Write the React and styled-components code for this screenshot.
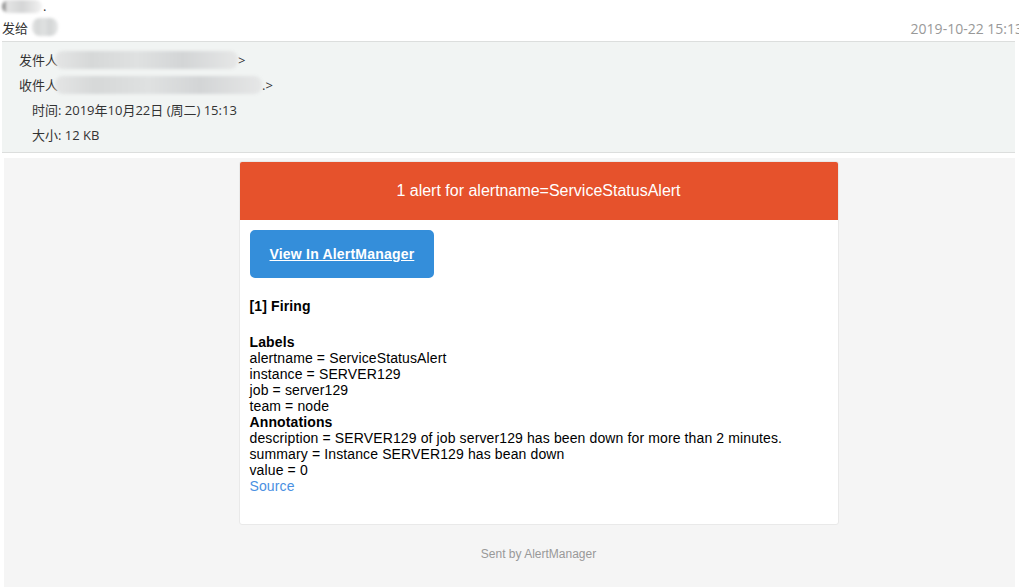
import React from "react";
import styled, { createGlobalStyle } from "styled-components";

const GlobalStyle = createGlobalStyle`
  html, body {
    margin: 0;
    padding: 0;
    background: #ffffff;
    overflow: hidden;
  }
  body {
    font-family: "Open Sans", "Noto Sans CJK SC", sans-serif;
  }
`;

const labels = [
  ["alertname", "ServiceStatusAlert"],
  ["instance", "SERVER129"],
  ["job", "server129"],
  ["team", "node"],
];

const annotations = [
  ["description", "SERVER129 of job server129 has been down for more than 2 minutes."],
  ["summary", "Instance SERVER129 has bean down"],
  ["value", "0"],
];

export default function App() {
  return (
    <React.Fragment>
      <GlobalStyle />
      <Page>
        <TopBar>
          <SenderLine>
            <Blur width={40} height={13} dark />
            <Dot>.</Dot>
          </SenderLine>
          <ToLine>
            <ToText>
              发给 <Blur width={26} height={18} />
            </ToText>
            <DateText>2019-10-22 15:13</DateText>
          </ToLine>
        </TopBar>

        <MetaPanel>
          <MetaRow>
            <MetaLabel>发件人</MetaLabel>
            <MetaValue>
              <Blur width={183} height={18} shift />
              &gt;
            </MetaValue>
          </MetaRow>
          <MetaRow>
            <MetaLabel>收件人</MetaLabel>
            <MetaValue>
              <Blur width={207} height={18} shift />
              .&gt;
            </MetaValue>
          </MetaRow>
          <MetaRow>
            <MetaLabel>时间</MetaLabel>
            <MetaValue>: 2019年10月22日 (周二) 15:13</MetaValue>
          </MetaRow>
          <MetaRow>
            <MetaLabel>大小</MetaLabel>
            <MetaValue>: 12 KB</MetaValue>
          </MetaRow>
        </MetaPanel>

        <MailBody>
          <MailInner>
            <Card>
              <CardHeader>1 alert for alertname=ServiceStatusAlert</CardHeader>
              <CardContent>
                <ButtonRow>
                  <ViewButton href="#">View In AlertManager</ViewButton>
                </ButtonRow>
                <AlertBlock>
                  <Title>[1] Firing</Title>
                  <SectionTitle>Labels</SectionTitle>
                  {labels.map(([k, v]) => (
                    <Line key={k}>
                      {k} = {v}
                    </Line>
                  ))}
                  <SectionTitle>Annotations</SectionTitle>
                  {annotations.map(([k, v]) => (
                    <Line key={k}>
                      {k} = {v}
                    </Line>
                  ))}
                  <SourceLink href="#">Source</SourceLink>
                </AlertBlock>
              </CardContent>
            </Card>
            <Footer>Sent by AlertManager</Footer>
          </MailInner>
        </MailBody>
      </Page>
    </React.Fragment>
  );
}

const Page = styled.div`
  width: 1019px;
  height: 587px;
  overflow: hidden;
  background: #ffffff;
`;

const TopBar = styled.div`
  padding: 0 0 0 2px;
  height: 42px;
  font-size: 13px;
  color: #333;
`;

const SenderLine = styled.div`
  display: flex;
  align-items: flex-end;
  height: 14px;
  margin-top: -1px;
`;

const Dot = styled.span`
  font-size: 13px;
  line-height: 14px;
  color: #333;
  margin-left: 1px;
`;

const ToLine = styled.div`
  display: flex;
  justify-content: space-between;
  align-items: center;
  height: 28px;
`;

const ToText = styled.span`
  display: flex;
  align-items: center;
  gap: 4px;
  color: #333;
`;

const DateText = styled.span`
  color: #999;
  font-size: 14px;
  margin-right: -4px;
  padding-top: 2px;
  white-space: nowrap;
`;

const Blur = styled.span`
  display: inline-block;
  flex: none;
  width: ${(p) => p.width}px;
  height: ${(p) => p.height}px;
  margin-left: ${(p) => (p.shift ? "-3px" : "0")};
  border-radius: 8px;
  background: ${(p) =>
    p.dark
      ? "linear-gradient(90deg, #8a8a8a 0 6%, #e4e4e4 12%, #d4d5d6 50%, #e6e6e6 80%, #f3f3f3 100%)"
      : "linear-gradient(90deg, #e4e5e5 0%, #d6d8d8 20%, #dfe1e1 45%, #d3d5d6 70%, #e6e7e7 100%)"};
  filter: blur(1.5px);
  vertical-align: middle;
`;

const MetaPanel = styled.div`
  margin: 0 4px 0 2px;
  background: #f1f4f3;
  border-top: 1px solid #dcdedd;
  border-bottom: 1px solid #dcdedd;
  padding: 5px 0 5px;
  font-size: 13px;
  color: #333;
`;

const MetaRow = styled.div`
  display: grid;
  grid-template-columns: 56px auto;
  height: 25px;
  align-items: center;
`;

const MetaLabel = styled.span`
  text-align: right;
`;

const MetaValue = styled.span`
  display: flex;
  align-items: center;
  white-space: pre;
`;

const MailBody = styled.div`
  margin: 5px 4px 0 4px;
  background: #f5f5f5;
  height: 440px;
  overflow: hidden;
`;

const MailInner = styled.div`
  width: 1069px;
  padding-top: 3px;
  display: flex;
  flex-direction: column;
  align-items: center;
  font-family: "Liberation Sans", Helvetica, Arial, sans-serif;
  font-size: 14px;
`;

const Card = styled.div`
  width: 598px;
  background: #ffffff;
  border: 1px solid #e9e9e9;
  border-radius: 3px;
  overflow: hidden;
`;

const CardHeader = styled.div`
  background: #e6522c;
  color: #ffffff;
  font-size: 16px;
  line-height: 18px;
  padding: 20px;
  text-align: center;
`;

const CardContent = styled.div`
  padding: 10px;
`;

const ButtonRow = styled.div`
  padding-bottom: 20px;
`;

const ViewButton = styled.a`
  display: inline-block;
  background: #348eda;
  border: solid #348eda;
  border-width: 10px 20px;
  border-radius: 5px;
  line-height: 28px;
  color: #ffffff;
  font-weight: bold;
  font-size: 14px;
  letter-spacing: 0.2px;
  text-decoration: underline;
`;

const AlertBlock = styled.div`
  color: #000;
  line-height: 16px;
  letter-spacing: 0.12px;
  padding-bottom: 20px;
`;

const Title = styled.div`
  font-weight: bold;
  margin-bottom: 20px;
`;

const SectionTitle = styled.div`
  font-weight: bold;
`;

const Line = styled.div``;

const SourceLink = styled.a`
  display: block;
  color: #4a90e2;
  text-decoration: none;
`;

const Footer = styled.div`
  padding-top: 22px;
  font-size: 12px;
  color: #999;
`;
